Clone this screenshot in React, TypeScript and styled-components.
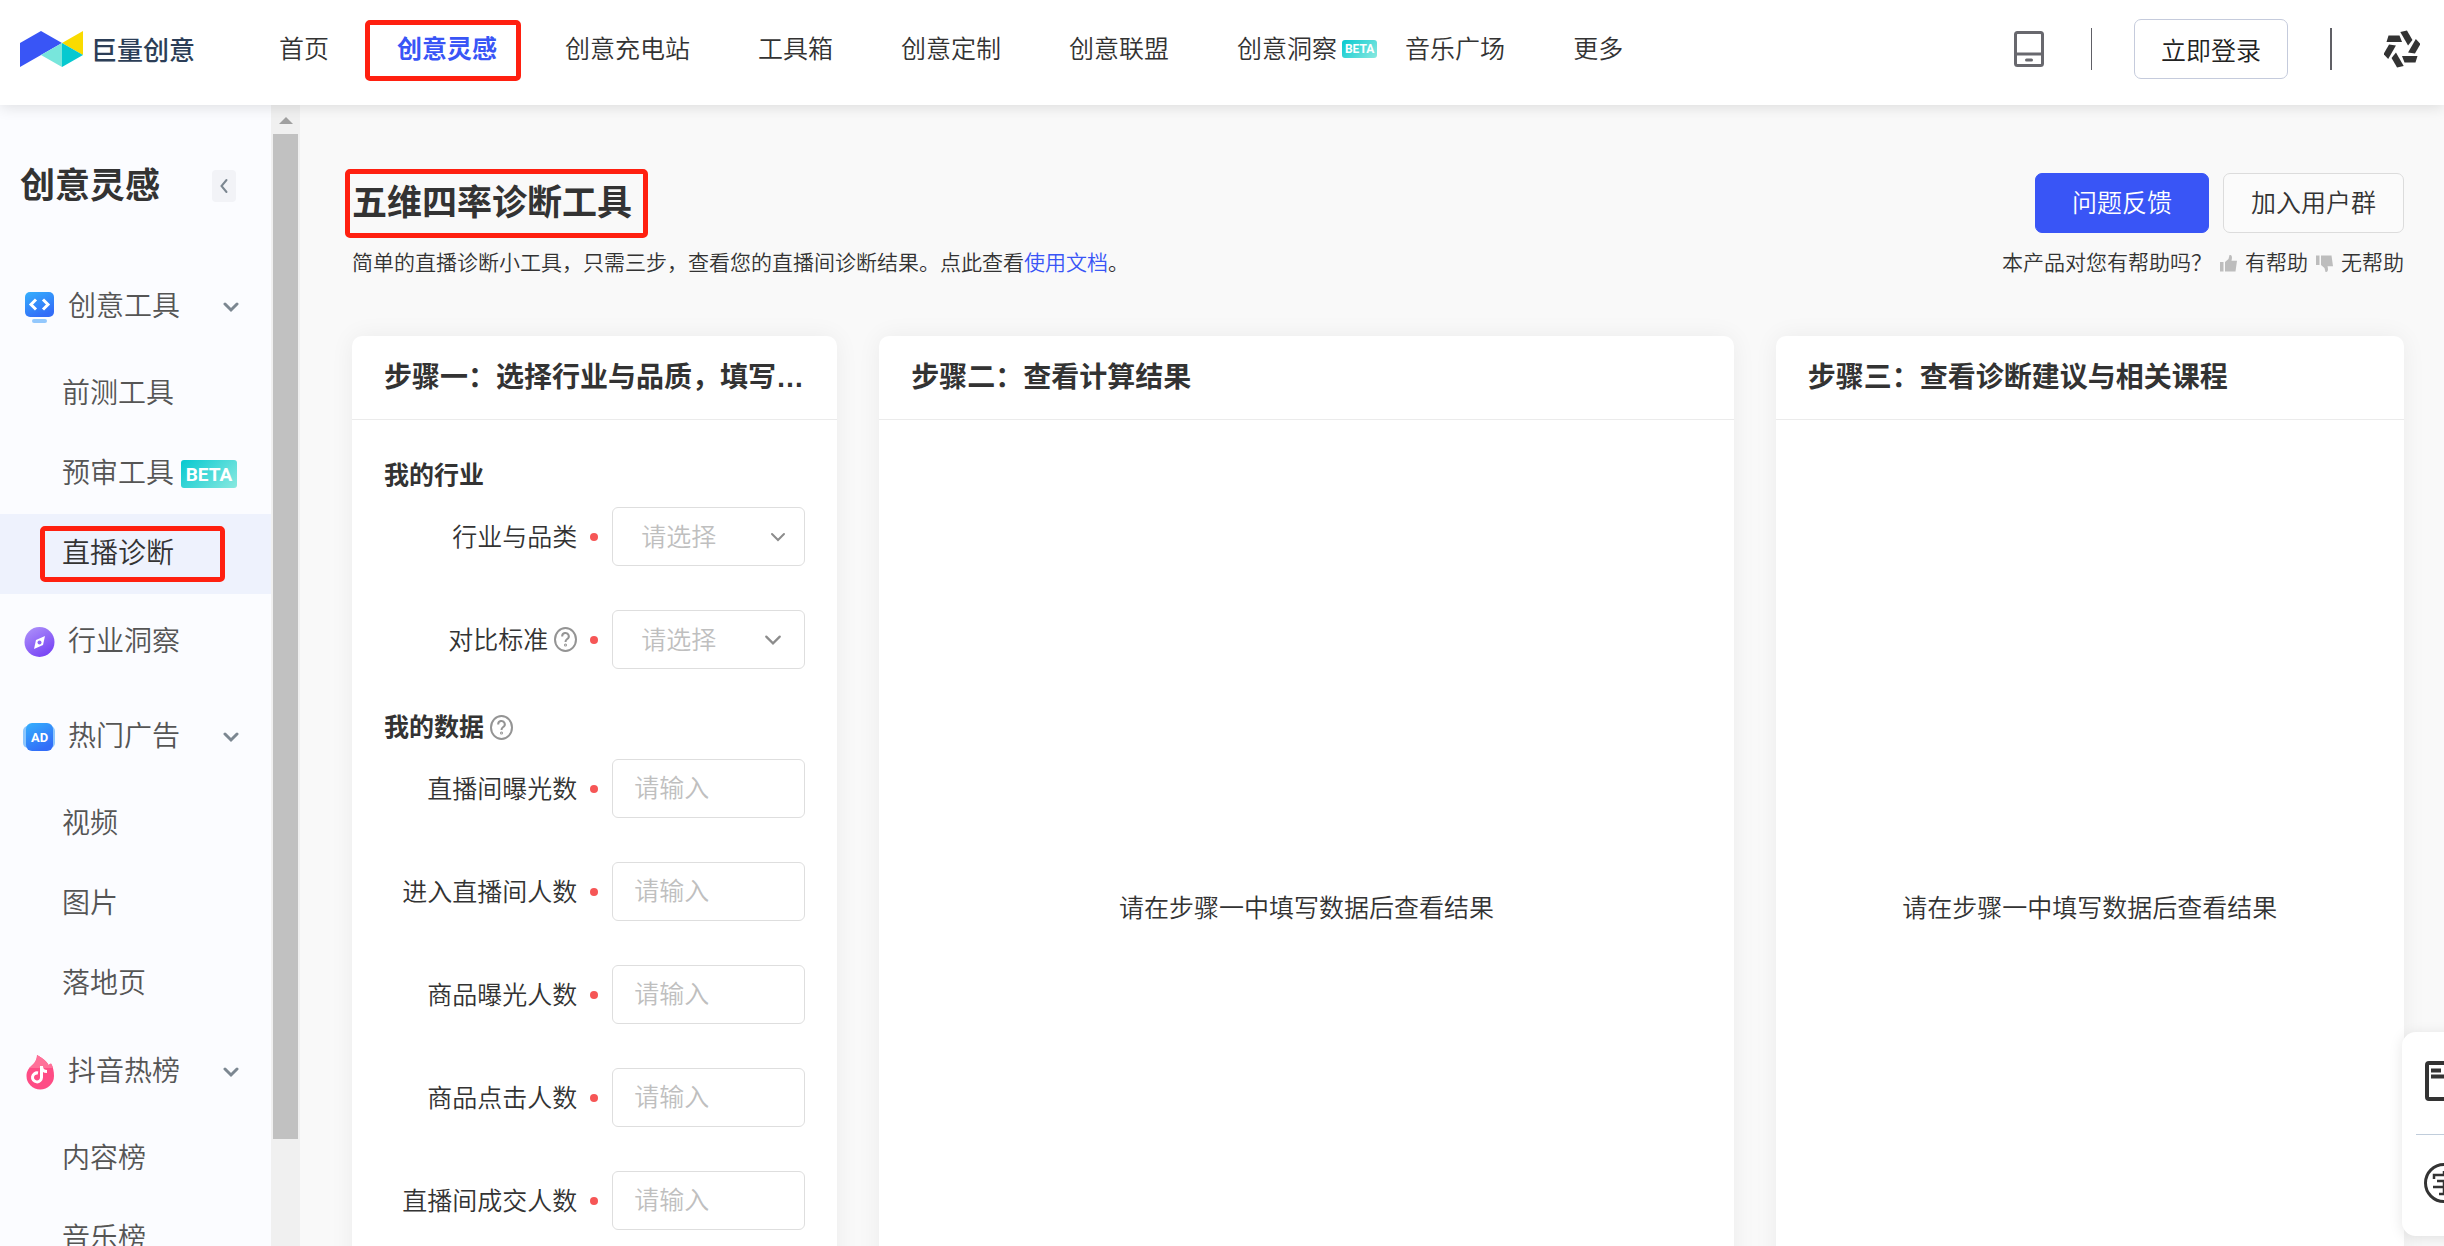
import React from 'react';
import styled, { createGlobalStyle, css } from 'styled-components';

const GlobalStyle = createGlobalStyle`
  *, *::before, *::after { box-sizing: border-box; }
  html, body { margin: 0; height: 100%; overflow: hidden; }
  body {
    background: #f9f9f9;
    color: #333;
    font-family: "Liberation Sans", "Noto Sans CJK SC", sans-serif;
    font-size: 25px;
    font-weight: 350;
    line-height: 36px;
  }
  button, input, select { font: inherit; }
  a { color: inherit; text-decoration: none; }
  h1, h2, h3, p, ul { margin: 0; padding: 0; }
`;

const Page = styled.div`
  display: flex;
  flex-direction: column;
  height: 100vh;
  overflow: hidden;
`;

/* Red frame laid over a highlighted item */
const Marked = styled.span<{ $inset: string }>`
  position: relative;
  &::after {
    content: '';
    position: absolute;
    inset: ${(p) => p.$inset};
    border: 5px solid #ff2010;
    border-radius: 5px;
    pointer-events: none;
  }
`;

/* ---------- header ---------- */
const Header = styled.header`
  position: relative;
  z-index: 2;
  flex: none;
  display: flex;
  align-items: center;
  height: 105px;
  padding: 0 24px 7px 20px;
  background: #fff;
  box-shadow: 0 2px 14px rgba(0, 0, 0, 0.12);
`;

const Brand = styled.a`
  display: flex;
  align-items: center;
  gap: 8px;
  width: 259px;
`;

const BrandName = styled.span`
  padding-top: 4px;
  color: #2c3e57;
  font-size: 26px;
  font-weight: 500;
`;

const Nav = styled.nav`
  display: flex;
  gap: 68px;
`;

const NavLink = styled.a<{ $active?: boolean }>`
  position: relative;
  white-space: nowrap;
  ${(p) => p.$active && css`color: #3955f6; font-weight: 700;`}
`;

const Beta = styled.span<{ $large?: boolean }>`
  display: inline-flex;
  align-items: center;
  justify-content: center;
  width: ${(p) => (p.$large ? 56 : 35)}px;
  height: ${(p) => (p.$large ? 28 : 18)}px;
  border-radius: 3px;
  background: linear-gradient(135deg, #06c9d0, #8ae9e0);
  color: #fff;
  font-family: Roboto, sans-serif;
  font-size: ${(p) => (p.$large ? 19 : 12)}px;
  font-weight: 700;
  line-height: 1;
`;

const NavBeta = styled.span`
  position: absolute;
  left: 100%;
  top: 0;
  display: flex;
  align-items: center;
  height: 100%;
  padding-left: 5px;
`;

const Tools = styled.div`
  display: flex;
  align-items: center;
  margin-left: auto;
`;

const IconButton = styled.button`
  display: flex;
  padding: 0;
  border: 0;
  background: none;
  color: #333;
`;

const Divider = styled.span<{ $bold?: boolean }>`
  width: ${(p) => (p.$bold ? 2 : 1)}px;
  height: 42px;
  margin: 0 ${(p) => (p.$bold ? 52 : 42)}px 0 ${(p) => (p.$bold ? 42 : 47)}px;
  background: #606066;
`;

const Button = styled.button<{ $kind?: 'primary' | 'login' }>`
  height: 60px;
  padding: 0 27px;
  border: 1px solid #dcdcdc;
  border-radius: 7px;
  background: #fbfbfb;
  color: #333;
  white-space: nowrap;
  ${(p) => p.$kind === 'login' && css`padding: 4px 26px 0; background: #fff; border-color: #c5cbdc; color: #222;`}
  ${(p) => p.$kind === 'primary' && css`background: #3955f6; border-color: #3955f6; color: #fff; padding: 0 36px;`}
`;

/* ---------- sidebar ---------- */
const Body = styled.div`
  display: flex;
  flex: 1;
  min-height: 0;
`;

const Sidebar = styled.aside`
  flex: none;
  width: 271px;
  overflow: hidden;
  background: #fbfcff;
`;

const SideHead = styled.div`
  display: flex;
  align-items: center;
  justify-content: space-between;
  height: 154px;
  padding: 7px 35px 0 20px;
`;

const SideTitle = styled.h2`
  font-size: 35px;
  line-height: 48px;
`;

const Collapse = styled.button`
  display: flex;
  align-items: center;
  justify-content: center;
  width: 24px;
  height: 32px;
  padding: 0;
  border: 0;
  border-radius: 4px;
  background: #f2f3f7;
  color: #6b7280;
`;

const GroupLink = styled.a`
  display: flex;
  align-items: center;
  height: 95px;
  padding: 0 32px 0 20px;
  color: #555;
  font-size: 28px;
  svg:first-child { margin-right: 8px; }
  svg:last-child:not(:first-child) { margin-left: auto; }
`;

const SubLink = styled.a<{ $active?: boolean }>`
  display: flex;
  align-items: center;
  gap: 7px;
  height: 80px;
  padding-left: 62px;
  color: ${(p) => (p.$active ? '#333' : '#555')};
  background: ${(p) => (p.$active ? '#eef2fd' : 'transparent')};
  font-size: 28px;
  white-space: nowrap;
`;

const ScrollTrack = styled.div`
  display: flex;
  flex-direction: column;
  align-items: center;
  flex: none;
  width: 29px;
  padding-top: 12px;
  background: #f0f0f0;
`;

const ScrollThumb = styled.div`
  width: 25px;
  height: 89%;
  margin-top: 10px;
  background: #c1c1c1;
`;

/* ---------- content ---------- */
const Main = styled.main`
  flex: 1;
  min-width: 0;
  padding: 68px 40px 0 52px;
`;

const Intro = styled.section`
  display: flex;
  justify-content: space-between;
  height: 163px;
`;

const IntroColumn = styled.div<{ $end?: boolean }>`
  display: flex;
  flex-direction: column;
  align-items: ${(p) => (p.$end ? 'flex-end' : 'flex-start')};
  gap: 14px;
`;

const TitleRow = styled.div`
  display: flex;
  align-items: center;
  gap: 14px;
  height: 60px;
`;

const PageTitle = styled.h1`
  font-size: 35px;
  line-height: 48px;
`;

const SmallText = styled.p`
  display: flex;
  align-items: center;
  font-size: 21px;
  line-height: 32px;
  white-space: nowrap;
`;

const TextLink = styled.a`
  color: #3955f6;
`;

const Vote = styled.button`
  display: flex;
  align-items: center;
  gap: 8px;
  margin-left: 8px;
  padding: 0;
  border: 0;
  background: none;
  color: #333;
`;

const Cards = styled.div`
  display: grid;
  grid-template-columns: minmax(0, 485fr) minmax(0, 854fr) minmax(0, 628fr);
  gap: 42px;
`;

const Card = styled.section`
  display: flex;
  flex-direction: column;
  min-height: 1060px;
  border-radius: 10px;
  background: #fff;
  box-shadow: 0 0 24px rgba(0, 0, 0, 0.06);
`;

const CardTitle = styled.h2`
  height: 84px;
  padding: 22px 32px 0;
  border-bottom: 1px solid #ebebeb;
  font-size: 28px;
  line-height: 40px;
  overflow: hidden;
  text-overflow: ellipsis;
  white-space: nowrap;
`;

const Empty = styled.div`
  flex: 1;
  display: flex;
  align-items: center;
  justify-content: center;
`;

const Form = styled.form`
  display: flex;
  flex-direction: column;
  gap: 40px;
  padding: 37px 32px 40px;
`;

const FieldGroup = styled.section`
  display: flex;
  flex-direction: column;
  gap: 44px;
`;

const GroupTitle = styled.h3`
  display: flex;
  align-items: center;
  gap: 6px;
  margin-bottom: -30px;
  font-size: 25px;
`;

const Field = styled.div`
  display: flex;
  align-items: center;
  justify-content: flex-end;
`;

const Label = styled.label`
  display: flex;
  align-items: center;
  gap: 6px;
  white-space: nowrap;
`;

const Required = styled.i`
  width: 8px;
  height: 8px;
  margin: 0 14px 0 13px;
  border-radius: 50%;
  background: #f65656;
`;

const control = css`
  width: 193px;
  height: 59px;
  border: 1px solid #dedede;
  border-radius: 6px;
  background: #fff;
  color: #bfbfbf;
  outline: none;
`;

const Input = styled.input`
  ${control}
  padding: 0 21px;
  &::placeholder { color: #bfbfbf; opacity: 1; }
`;

const SelectBox = styled.div<{ $iconRight: number }>`
  position: relative;
  svg {
    position: absolute;
    right: ${(p) => p.$iconRight}px;
    top: 50%;
    transform: translateY(-50%);
    pointer-events: none;
  }
`;

const Select = styled.select`
  ${control}
  display: block;
  appearance: none;
  padding: 0 28px;
`;

/* ---------- floating panel ---------- */
const Floating = styled.div`
  position: fixed;
  right: -42px;
  bottom: 10px;
  z-index: 3;
  width: 84px;
  padding: 0 14px;
  border-radius: 14px;
  background: #fff;
  box-shadow: 0 2px 14px rgba(0, 0, 0, 0.1);
`;

const FloatButton = styled.button`
  display: flex;
  align-items: center;
  justify-content: center;
  width: 100%;
  height: 102px;
  padding: 0 0 5px;
  border: 0;
  background: none;
  color: #333;
  & + & { border-top: 1px solid #c0cddb; }
`;

/* ---------- icons ---------- */
const Logo = () => (
  <svg width="63" height="36" viewBox="0 0 63 36" aria-hidden="true">
    <path d="M0 12 21 0 42 12 21 24 0 36Z" fill="#3955f6" />
    <path d="M63 0V24L42 12Z" fill="#fadb00" />
    <path d="M42 12 63 24 42 36Z" fill="#06c9d0" />
    <path d="M42 12V36L21 24Z" fill="#78e6dc" />
  </svg>
);

const DeviceIcon = () => (
  <svg width="30" height="36" viewBox="0 0 30 36" fill="none" stroke="#68686e" strokeWidth="3">
    <rect x="1.5" y="1.5" width="27" height="33" rx="2" />
    <path d="M2 23H28" />
    <path d="M12.500 29H17.500" strokeLinecap="round" />
  </svg>
);

const PinwheelIcon = () => (
  <svg width="36" height="38" viewBox="-18 -19 36 38" fill="#333" aria-hidden="true">
    {[0, 60, 120, 180, 240, 300].map((a) => (
      <path key={a} transform={`rotate(${a})`} d="M-13.500 -13.500H-2.500L0 -7H-15.500Z" />
    ))}
  </svg>
);

const Chevron = ({ size = 16, left = false, width = 3, color = '#7c8791' }) => (
  <svg
    width={size}
    height={size}
    viewBox="0 0 16 16"
    fill="none"
    stroke={color}
    strokeWidth={width}
    strokeLinecap="round"
    aria-hidden="true"
  >
    <path d={left ? 'M10.500 2 5.500 8 10.500 14' : 'M2 5 8 11 14 5'} />
  </svg>
);

const ToolIcon = () => (
  <svg width="40" height="40" viewBox="0 0 40 40" aria-hidden="true">
    <defs>
      <linearGradient id="blue" x1="0" y1="0" x2="0.500" y2="1">
        <stop offset="0" stopColor="#35b0fd" />
        <stop offset="1" stopColor="#326df8" />
      </linearGradient>
    </defs>
    <rect x="5" y="5" width="29" height="25" rx="5" fill="url(#blue)" />
    <rect x="12" y="32" width="15" height="4" rx="2" fill="#93c8fd" />
    <path d="M16 12.500 11 17.500 16 22.500M23 12.500 28 17.500 23 22.500" fill="none" stroke="#fff" strokeWidth="3" />
  </svg>
);

const CompassIcon = () => (
  <svg width="40" height="40" viewBox="0 0 40 40" aria-hidden="true">
    <defs>
      <linearGradient id="purple" x1="0" y1="0" x2="0.600" y2="1">
        <stop offset="0" stopColor="#b095fa" />
        <stop offset="1" stopColor="#7a46f5" />
      </linearGradient>
    </defs>
    <circle cx="19.500" cy="20" r="15" fill="url(#purple)" />
    <path d="M25 14 23 23 14 27 16 18Z" fill="#fff" />
    <circle cx="19.500" cy="20.500" r="2" fill="#8d63f6" />
  </svg>
);

const AdIcon = () => (
  <svg width="40" height="40" viewBox="0 0 40 40" aria-hidden="true">
    <rect x="3" y="9" width="32" height="22" rx="5" fill="#8cc6fd" />
    <rect x="6" y="6" width="27" height="28" rx="6" fill="url(#blue)" />
    <text x="19.500" y="25" textAnchor="middle" fill="#fff" fontFamily="Roboto, sans-serif" fontWeight="700" fontSize="13">AD</text>
  </svg>
);

const FlameIcon = () => (
  <svg width="40" height="40" viewBox="0 0 40 40" aria-hidden="true">
    <path d="M17 3C23 6 27 10 28.500 13L31 11.500C33 15 34 19 34 24A13.700 13.500 0 0 1 6.500 24C6.500 19 9 16 12 13.500 15 11 17 8 17 3Z" fill="#fe4c85" />
    <path d="M17 3C23 6 27 10 28.500 13L31 11.500C32 13 32.500 14 33 16L9 16C13 12.500 17 9 17 3Z" fill="#fe7199" />
    <path d="M21.500 14V25.500A4.500 4.500 0 1 1 18 21M21.500 15C22 18 24 19.500 27 19.500" fill="none" stroke="#fff" strokeWidth="3" />
  </svg>
);

const HelpIcon = () => (
  <svg width="23" height="25" viewBox="0 0 23 25" fill="none" stroke="#949494" strokeWidth="2" aria-hidden="true">
    <ellipse cx="11.500" cy="12.500" rx="10.500" ry="11.500" />
    <path d="M8.200 9.500A3.300 3.300 0 1 1 13 12.200C12 12.900 11.500 13.400 11.500 15" />
    <circle cx="11.500" cy="18" r="0.500" />
  </svg>
);

const Thumb = ({ down = false }) => (
  <svg width="17" height="17" viewBox="0 0 17 17" fill="#bdbdbd" aria-hidden="true">
    <g transform={down ? 'matrix(1 0 0 -1 0 17)' : undefined}>
      <path d="M0 7H3.500V16.500H0ZM5 7 8.500 4 9.500 0C12 0 12.500 2 11.500 5.800H17L15.500 16.500H5Z" />
    </g>
  </svg>
);

const DocIcon = () => (
  <svg width="38" height="40" viewBox="0 0 38 40" fill="none" stroke="#333" strokeWidth="4">
    <rect x="2" y="2" width="34" height="36" rx="2" />
    <path d="M6 9.500H16M6 15.500H32" />
  </svg>
);

const GlyphIcon = () => (
  <svg width="40" height="40" viewBox="0 0 40 40" fill="none" stroke="#333" strokeWidth="3">
    <circle cx="20" cy="20" r="18.500" />
    <path d="M10 16V12H30V16M13 18H27M9 24H31M20 18V31H15M20 8V12" strokeWidth="2.500" />
  </svg>
);

/* ---------- data ---------- */
const navAfter = ['创意充电站', '工具箱', '创意定制', '创意联盟'];
const metrics = ['直播间曝光数', '进入直播间人数', '商品曝光人数', '商品点击人数', '直播间成交人数'];

const SelectField = ({ id, label, help = false }: { id: string; label: string; help?: boolean }) => (
  <Field>
    <Label htmlFor={id}>
      {label}
      {help && <HelpIcon />}
    </Label>
    <Required />
    <SelectBox $iconRight={help ? 23 : 19}>
      <Select id={id} defaultValue="">
        <option value="">请选择</option>
      </Select>
      <Chevron size={help ? 18 : 16} width={2} color="#8c8c8c" />
    </SelectBox>
  </Field>
);

export default function App() {
  return (
    <>
      <GlobalStyle />
      <Page>
        <Header>
          <Brand href="#">
            <Logo />
            <BrandName>巨量创意</BrandName>
          </Brand>
          <Nav>
            <NavLink href="#">首页</NavLink>
            <NavLink href="#" $active>
              <Marked $inset="-15px -24px -18px -32px">创意灵感</Marked>
            </NavLink>
            {navAfter.map((t) => <NavLink href="#" key={t}>{t}</NavLink>)}
            <NavLink href="#">
              创意洞察
              <NavBeta><Beta>BETA</Beta></NavBeta>
            </NavLink>
            <NavLink href="#">音乐广场</NavLink>
            <NavLink href="#">更多</NavLink>
          </Nav>
          <Tools>
            <IconButton aria-label="手机版"><DeviceIcon /></IconButton>
            <Divider />
            <Button $kind="login">立即登录</Button>
            <Divider $bold />
            <IconButton aria-label="巨量引擎"><PinwheelIcon /></IconButton>
          </Tools>
        </Header>
        <Body>
          <Sidebar>
            <SideHead>
              <SideTitle>创意灵感</SideTitle>
              <Collapse aria-label="收起"><Chevron left width={2} /></Collapse>
            </SideHead>
            <nav>
              <GroupLink href="#"><ToolIcon />创意工具<Chevron /></GroupLink>
              <SubLink href="#">前测工具</SubLink>
              <SubLink href="#">预审工具<Beta $large>BETA</Beta></SubLink>
              <SubLink href="#" $active>
                <Marked $inset="-10px -51px -10px -22px">直播诊断</Marked>
              </SubLink>
              <GroupLink href="#"><CompassIcon />行业洞察</GroupLink>
              <GroupLink href="#"><AdIcon />热门广告<Chevron /></GroupLink>
              <SubLink href="#">视频</SubLink>
              <SubLink href="#">图片</SubLink>
              <SubLink href="#">落地页</SubLink>
              <GroupLink href="#"><FlameIcon />抖音热榜<Chevron /></GroupLink>
              <SubLink href="#">内容榜</SubLink>
              <SubLink href="#">音乐榜</SubLink>
            </nav>
          </Sidebar>
          <ScrollTrack>
            <svg width="14" height="7" viewBox="0 0 14 7" aria-hidden="true"><path d="M0 7 7 0 14 7Z" fill="#a0a0a0" /></svg>
            <ScrollThumb />
          </ScrollTrack>
          <Main>
            <Intro>
              <IntroColumn>
                <TitleRow>
                  <PageTitle><Marked $inset="-14px -16px -16px -7px">五维四率诊断工具</Marked></PageTitle>
                </TitleRow>
                <SmallText>
                  简单的直播诊断小工具，只需三步，查看您的直播间诊断结果。点此查看
                  <TextLink href="#">使用文档</TextLink>。
                </SmallText>
              </IntroColumn>
              <IntroColumn $end>
                <TitleRow>
                  <Button $kind="primary">问题反馈</Button>
                  <Button>加入用户群</Button>
                </TitleRow>
                <SmallText>
                  本产品对您有帮助吗？
                  <Vote><Thumb />有帮助</Vote>
                  <Vote><Thumb down />无帮助</Vote>
                </SmallText>
              </IntroColumn>
            </Intro>
            <Cards>
              <Card>
                <CardTitle>步骤一：选择行业与品质，填写数据</CardTitle>
                <Form>
                  <FieldGroup>
                    <GroupTitle>我的行业</GroupTitle>
                    <SelectField id="industry" label="行业与品类" />
                    <SelectField id="standard" label="对比标准" help />
                  </FieldGroup>
                  <FieldGroup>
                    <GroupTitle>我的数据<HelpIcon /></GroupTitle>
                    {metrics.map((m, i) => (
                      <Field key={m}>
                        <Label htmlFor={`metric-${i}`}>{m}</Label>
                        <Required />
                        <Input id={`metric-${i}`} placeholder="请输入" />
                      </Field>
                    ))}
                  </FieldGroup>
                </Form>
              </Card>
              <Card>
                <CardTitle>步骤二：查看计算结果</CardTitle>
                <Empty>请在步骤一中填写数据后查看结果</Empty>
              </Card>
              <Card>
                <CardTitle>步骤三：查看诊断建议与相关课程</CardTitle>
                <Empty>请在步骤一中填写数据后查看结果</Empty>
              </Card>
            </Cards>
          </Main>
        </Body>
        <Floating>
          <FloatButton aria-label="文档"><DocIcon /></FloatButton>
          <FloatButton aria-label="字体"><GlyphIcon /></FloatButton>
        </Floating>
      </Page>
    </>
  );
}
